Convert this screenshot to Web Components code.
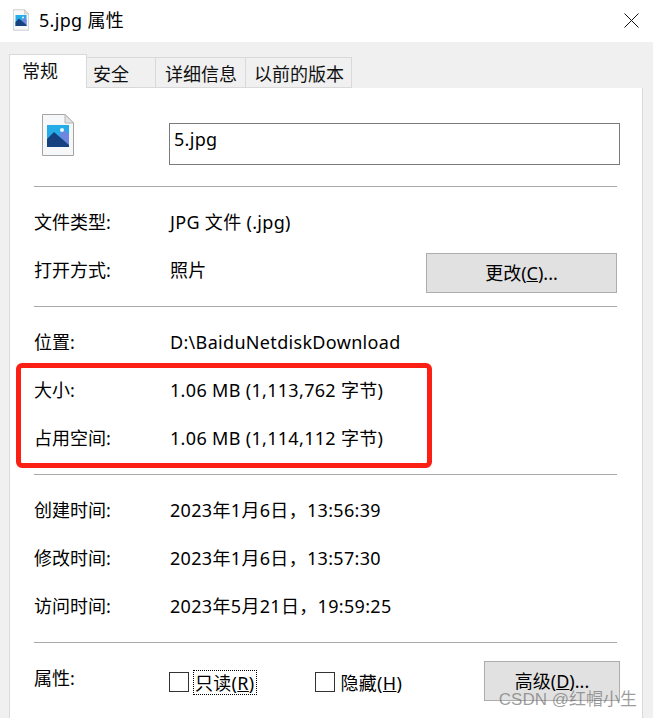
<!DOCTYPE html>
<html><head><meta charset="utf-8"><style>
html,body{margin:0;padding:0;background:#f0f0f0}
body{width:653px;height:718px;overflow:hidden;font:18px/24px "Noto Sans","Noto Sans CJK SC",sans-serif;color:#000}
</style></head><body>
<prop-dialog></prop-dialog>
<script>
const FONT='"Noto Sans","Noto Sans CJK SC",sans-serif';
const fileIcon=(w,h)=>`<svg width="${w}" height="${h}" viewBox="0 0 32 42" style="display:block"><path d="M.5.5H23L31.5 9V41.5H.5Z" fill="#f6f7f9" stroke="#a4a4a4"/><path d="M23 .5V9H31.5Z" fill="#e3e3e3" stroke="#b5b5b5"/><rect x="5" y="11" width="22" height="22" fill="#25ace8"/><path d="M27 33V20L22 16 17 21 27 33Z" fill="#6f86e0"/><path d="M5 33V25L12 18 27 31V33Z" fill="#15427f"/><circle cx="20" cy="16" r="2" fill="#e8f6fd"/></svg>`;
class Base extends HTMLElement{
  constructor(){super();this.attachShadow({mode:'open'}).innerHTML=this.markup()}
}
customElements.define('title-bar',class extends Base{markup(){return `<style>
:host{display:flex;align-items:center;height:42px;background:#fff;padding:0 14px 2px 13px;box-sizing:border-box;font-size:18px}
span{margin-left:10px;flex:1;letter-spacing:.3px}
svg{flex:none}
</style>${fileIcon(16,22)}<span><slot></slot></span><svg width="15" height="15" viewBox="0 0 15 15"><path d="M.5.5 14.5 14.5M14.5.5 .5 14.5" stroke="#111" stroke-width="1" fill="none"/></svg>`}});
customElements.define('tab-strip',class extends Base{markup(){return `<style>
:host{display:flex;align-items:flex-end;height:46px;padding-left:9px;box-sizing:border-box;background:#f0f0f0;position:relative;z-index:1;margin-bottom:-1px}
</style><slot></slot>`}});
customElements.define('tab-item',class extends Base{markup(){return `<style>
:host{display:block;box-sizing:border-box;height:31px;border:1px solid #d9d9d9;border-width:1px 1px 1px 0;padding:0 0 0 9px;line-height:33px;font-size:18px;white-space:nowrap;color:#111}
:host([second]){padding-left:6px}
:host([active]){height:34px;background:#fff;border-width:1px 1px 0 1px;padding:0 0 0 12px;line-height:32px}
</style><slot></slot>`}});
customElements.define('tab-panel',class extends Base{markup(){return `<style>
:host{display:block;box-sizing:border-box;margin:0 10px 0 9px;height:631px;background:#fff;border:1px solid #d9d9d9;border-bottom:0;padding:0 25px 0 24px}
</style><slot></slot>`}});
customElements.define('head-row',class extends Base{markup(){return `<style>
:host{display:flex;height:98px;box-sizing:border-box;padding-top:26px;width:587px}
.i{width:135px;padding-left:8px;box-sizing:border-box}
.b{box-sizing:border-box;width:451px;height:42px;margin-top:9px;border:1px solid #7a7a7a;padding:0 4px;line-height:30px;font-size:18px;letter-spacing:.3px}
</style><div class="i">${fileIcon(32,42)}</div><div class="b"><slot></slot></div>`}});
customElements.define('hr-line',class extends Base{markup(){return `<style>:host{display:block;height:1px;background:#a9a9a9;margin:0}</style>`}});
customElements.define('prop-section',class extends Base{markup(){return `<style>:host{display:block;padding:11px 0 12px}</style><slot></slot>`}});
customElements.define('prop-row',class extends Base{markup(){return `<style>
:host{display:flex;align-items:center;height:48px;font-size:18px}
.k{width:136px;flex:none}
.v{flex:1;white-space:nowrap;letter-spacing:.32px}
::slotted([slot=a]){margin-top:6px}
</style><div class="k"><slot name="k"></slot></div><div class="v"><slot></slot></div><slot name="a"></slot>`}});
customElements.define('win-button',class extends Base{markup(){return `<style>
:host{display:flex;align-items:center;justify-content:center;box-sizing:border-box;background:#e1e1e1;border:1px solid #adadad;height:40px;font-size:18px;white-space:nowrap;flex:none}
</style><slot></slot>`}});
customElements.define('win-check',class extends Base{markup(){return `<style>
:host{display:flex;align-items:center;font-size:18px;white-space:nowrap;flex:none}
i{display:block;box-sizing:border-box;width:20px;height:20px;border:1px solid #333;background:#fff;margin-right:4px}
span{display:block;box-sizing:border-box;height:25px;min-width:62px;border:1px solid transparent;padding:0 1px;line-height:24px;letter-spacing:.3px}
:host([focus]) span{border:1px dotted #000}
</style><i></i><span><slot></slot></span>`}});
customElements.define('attr-row',class extends Base{markup(){return `<style>
:host{display:flex;align-items:center;height:48px;font-size:18px}
.k{width:135px;flex:none}
.c{display:flex;gap:58px;flex:1;padding-top:8px}
::slotted([slot=a]){margin:6px -3px 0 0}
</style><div class="k"><slot name="k"></slot></div><div class="c"><slot name="c"></slot></div><slot name="a"></slot>`}});
customElements.define('red-mark',class extends Base{markup(){return `<style>:host{position:absolute;left:16px;top:363px;width:416px;height:105px;box-sizing:border-box;border:5px solid #fc1f14;border-radius:6px;pointer-events:none}</style>`}});
customElements.define('water-mark',class extends Base{markup(){return `<style>:host{position:absolute;right:16px;top:688px;font:17px/24px "Liberation Sans","Noto Sans CJK SC",sans-serif;color:rgba(120,120,120,.72);white-space:nowrap}</style><slot></slot>`}});
customElements.define('prop-dialog',class extends Base{markup(){return `<style>:host{display:block;position:relative;width:653px;height:718px;overflow:hidden;background:#f0f0f0;font-family:${FONT}}</style>
<title-bar>5.jpg 属性</title-bar>
<tab-strip><tab-item active style="width:78px">常规</tab-item><tab-item second style="width:69px">安全</tab-item><tab-item style="width:90px">详细信息</tab-item><tab-item style="width:106px;padding-left:8px">以前的版本</tab-item></tab-strip>
<tab-panel>
<head-row>5.jpg</head-row><hr-line></hr-line>
<prop-section><prop-row><span slot="k">文件类型:</span>JPG 文件 (.jpg)</prop-row><prop-row><span slot="k">打开方式:</span>照片<win-button slot="a" style="width:191px"><span>更改(<u>C</u>)...</span></win-button></prop-row></prop-section><hr-line></hr-line>
<prop-section><prop-row><span slot="k">位置:</span>D:\\BaiduNetdiskDownload</prop-row><prop-row><span slot="k">大小:</span>1.06 MB (1,113,762 字节)</prop-row><prop-row><span slot="k">占用空间:</span>1.06 MB (1,114,112 字节)</prop-row></prop-section><hr-line></hr-line>
<prop-section><prop-row><span slot="k">创建时间:</span>2023年1月6日，13:56:39</prop-row><prop-row><span slot="k">修改时间:</span>2023年1月6日，13:57:30</prop-row><prop-row><span slot="k">访问时间:</span>2023年5月21日，19:59:25</prop-row></prop-section><hr-line></hr-line>
<prop-section><attr-row><span slot="k">属性:</span><win-check slot="c" focus>只读(<u>R</u>)</win-check><win-check slot="c">隐藏(<u>H</u>)</win-check><win-button slot="a" style="width:136px"><span>高级(<u>D</u>)...</span></win-button></attr-row></prop-section>
</tab-panel>
<red-mark></red-mark><water-mark>CSDN @红帽小生</water-mark>`}});
</script></body></html>
